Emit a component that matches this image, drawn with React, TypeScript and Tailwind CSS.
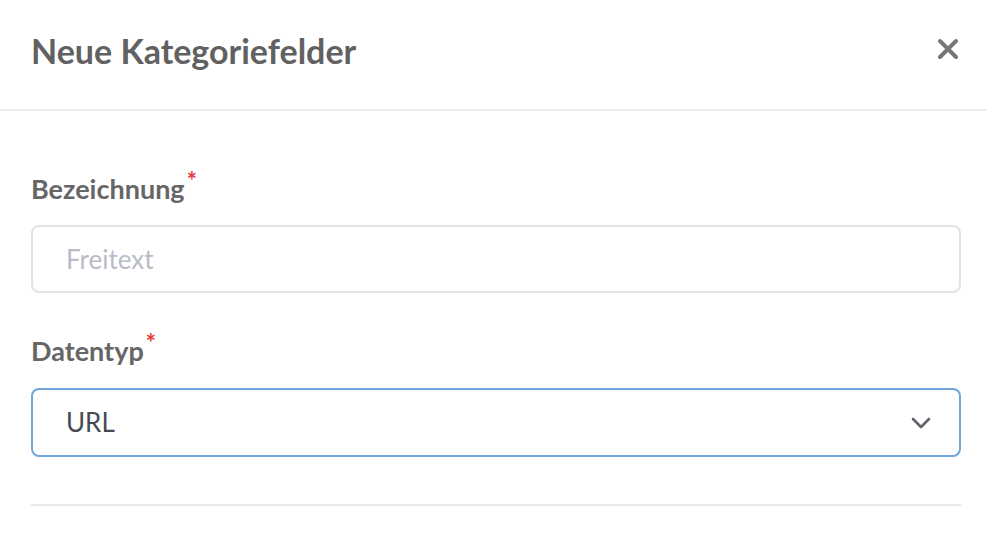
const font = { fontFamily: "Lato, 'Noto Sans', sans-serif" };

function Label({ children }: { children: React.ReactNode }) {
  return (
    <label className="flex items-start text-[27px] font-bold leading-none text-[#666666]">
      {children}
      <span className="ml-[2px] -mt-[6px] text-[24px] text-[#e53935]">*</span>
    </label>
  );
}

export default function App() {
  return (
    <div className="w-[986px] h-[534px] bg-white overflow-hidden" style={font}>
      <div className="flex h-[111px] items-center justify-between border-b-2 border-[#ebebef] pl-[31px] pr-[26px]">
        <h1 className="text-[34px] font-bold text-[#616161] -mt-[8px]">Neue Kategoriefelder</h1>
        <button className="-mt-[12px] text-[#777777]">
          <svg width="24" height="24" viewBox="0 0 24 24" fill="none" stroke="currentColor" strokeWidth="4" strokeLinecap="round">
            <path d="M4 4L20 20M20 4L4 20" />
          </svg>
        </button>
      </div>
      <div className="pl-[31px] pr-[25px] pt-[64px]">
        <Label>Bezeichnung</Label>
        <div className="mt-[23px] flex h-[68px] items-center rounded-[8px] border-2 border-[#dfe3e7] px-[33px]">
          <span className="text-[26px] text-[#b9bcc8]">Freitext</span>
        </div>
        <div className="mt-[44px]">
          <Label>Datentyp</Label>
        </div>
        <div className="mt-[24px] flex h-[69px] items-center justify-between rounded-[8px] border-2 border-[#6fa6df] pl-[33px] pr-[28px]">
          <span className="text-[26px] text-[#454b55]">URL</span>
          <svg width="20" height="12" viewBox="0 0 20 12" fill="none" stroke="#5f646e" strokeWidth="2.6" strokeLinecap="round" strokeLinejoin="round">
            <path d="M2 2L10 10L18 2" />
          </svg>
        </div>
        <div className="mt-[47px] h-[2px] bg-[#e6e8eb]" />
      </div>
    </div>
  );
}
